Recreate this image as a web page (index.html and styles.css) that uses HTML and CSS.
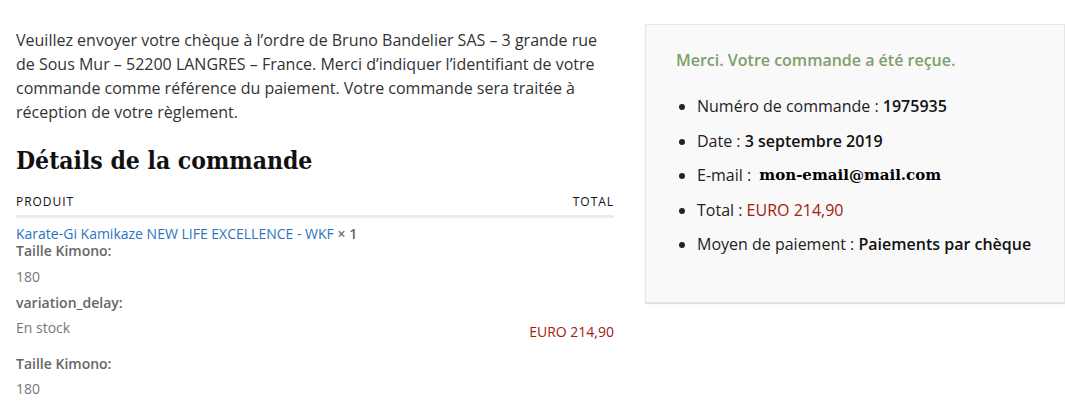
FILE: index.html
```html
<!DOCTYPE html>
<html lang="fr">
<head>
<meta charset="utf-8">
<title>Commande reçue</title>
<link rel="stylesheet" href="styles.css">
</head>
<body>
<div class="page">
  <main class="main">
    <p class="intro">Veuillez envoyer votre chèque à l’ordre de Bruno Bandelier SAS – 3 grande rue de Sous Mur – 52200 LANGRES – France. Merci d’indiquer l’identifiant de votre commande comme référence du paiement. Votre commande sera traitée à réception de votre règlement.</p>
    <h2 class="title">Détails de la commande</h2>
    <div class="table-head">
      <span>Produit</span>
      <span>Total</span>
    </div>
    <div class="row">
      <div class="product">
        <div class="product-line"><a class="product-link" href="#">Karate-Gi Kamikaze NEW LIFE EXCELLENCE - WKF</a> <strong class="qty">× 1</strong></div>
        <dl class="meta">
          <dt>Taille Kimono:</dt>
          <dd>180</dd>
          <dt>variation_delay:</dt>
          <dd>En stock</dd>
        </dl>
        <dl class="meta meta-second">
          <dt>Taille Kimono:</dt>
          <dd>180</dd>
        </dl>
      </div>
      <div class="total">EURO 214,90</div>
    </div>
  </main>
  <aside class="summary">
    <p class="thanks">Merci. Votre commande a été reçue.</p>
    <ul class="overview">
      <li>Numéro de commande : <strong>1975935</strong></li>
      <li>Date : <strong>3 septembre 2019</strong></li>
      <li>E-mail : <strong class="email">mon-email@mail.com</strong></li>
      <li>Total : <strong class="price">EURO 214,90</strong></li>
      <li>Moyen de paiement : <strong>Paiements par chèque</strong></li>
    </ul>
  </aside>
</div>
</body>
</html>
```
FILE: styles.css
```css
* { box-sizing: border-box; }

html, body {
  margin: 0;
  padding: 0;
  background: #fff;
}

body {
  font-family: "Open Sans", "Liberation Sans", sans-serif;
  color: #3a3a3a;
  font-size: 16px;
}

.page {
  display: flex;
  align-items: flex-start;
  gap: 31px;
  padding: 24px 0 0 16px;
}

.main {
  width: 598px;
  flex: none;
}

.intro {
  margin: 4px 0 0;
  line-height: 24px;
  color: #333;
}

.title {
  margin: 22px 0 0;
  font-family: "DejaVu Serif Condensed", "DejaVu Serif", serif;
  font-weight: bold;
  font-size: 24.5px;
  line-height: 30px;
  color: #111;
}

.table-head {
  display: flex;
  justify-content: space-between;
  margin-top: 18px;
  padding-bottom: 5px;
  border-bottom: 3px solid #ebebeb;
  font-size: 12px;
  line-height: 16px;
  letter-spacing: 0.08em;
  text-transform: uppercase;
  color: #111;
}

.row {
  display: flex;
  justify-content: space-between;
  padding-top: 7px;
}

.product {
  font-size: 14px;
  line-height: 17px;
}

.product-link {
  color: #2f73be;
  text-decoration: none;
}

.qty {
  color: #666;
  font-weight: 600;
}

.meta {
  margin: 0;
  color: #777;
}

.meta dt {
  font-weight: 600;
  color: #666;
}

.meta dd {
  margin: 9px 0 0;
}

.meta dt + dd + dt {
  margin-top: 9px;
}

.meta dd:nth-of-type(2) {
  margin-top: 8px;
}

.meta-second {
  margin-top: 19px;
}

.meta-second dd {
  margin-top: 8px;
}

.total {
  padding-top: 98px;
  font-size: 14px;
  line-height: 17px;
  color: #a3200f;
}

.summary {
  width: 420px;
  flex: none;
  background: #f9f9f9;
  border: 1px solid #e6e6e6;
  box-shadow: 0 1px 1px rgba(0, 0, 0, 0.12);
  padding: 24px 30px 35px;
}

.thanks {
  margin: 0;
  font-weight: 600;
  font-size: 16px;
  line-height: 22px;
  color: #7e9f6c;
}

.overview {
  margin: 23px 0 0;
  padding-left: 21px;
  list-style: disc;
  color: #222;
}

.overview li {
  line-height: 24px;
  margin-bottom: 10.5px;
}

.overview strong {
  font-weight: 600;
  color: #111;
}

.overview .email {
  font-family: "DejaVu Serif", serif;
  font-weight: bold;
  font-size: 15px;
  line-height: 1;
  vertical-align: 1px;
  color: #000;
  margin-left: 4px;
}

.overview .price {
  font-weight: 400;
  color: #a3200f;
}
```
